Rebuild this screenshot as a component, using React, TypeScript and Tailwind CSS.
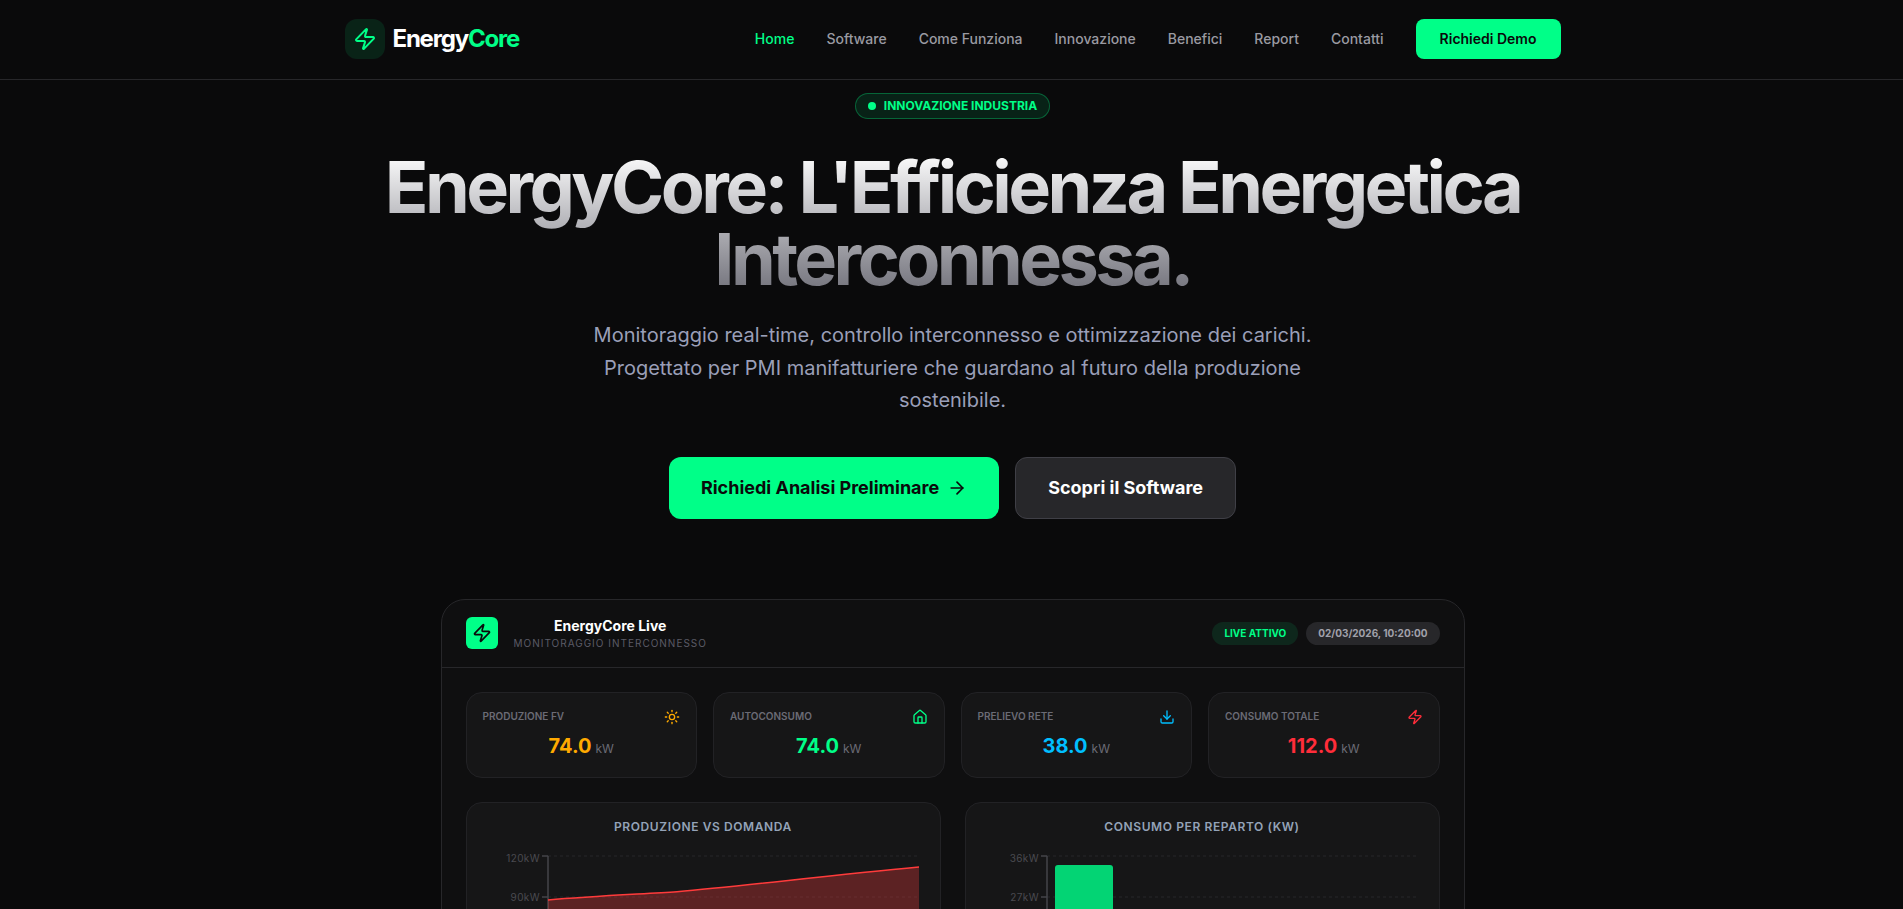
import React from 'react';
import { ArrowRight, Download, Home, Sun, Zap } from 'lucide-react';

const navItems = ['Software', 'Come Funziona', 'Innovazione', 'Benefici', 'Report', 'Contatti'];

const stats = [
  { label: 'PRODUZIONE FV', value: '74.0', color: 'text-[#ffaa00]', Icon: Sun },
  { label: 'AUTOCONSUMO', value: '74.0', color: 'text-[#00ff88]', Icon: Home },
  { label: 'PRELIEVO RETE', value: '38.0', color: 'text-[#00bfff]', Icon: Download },
  { label: 'CONSUMO TOTALE', value: '112.0', color: 'text-[#ff2d3a]', Icon: Zap },
];

function AreaChart() {
  return (
    <svg width="442" height="70" className="block">
      <line x1="65" y1="10" x2="435" y2="10" stroke="#27272a" strokeDasharray="3 3" />
      <line x1="65" y1="51" x2="435" y2="51" stroke="#27272a" strokeDasharray="3 3" />
      <path d="M65 10H59M65 51H59M65 10V70" stroke="#44444a" strokeWidth="1.5" fill="none" />
      <path d="M65 54 C 110 50, 160 48, 194 45.7 C 260 40, 340 30, 436 21 V70 H65 Z" fill="#ff4040" fillOpacity="0.3" />
      <path d="M65 54 C 110 50, 160 48, 194 45.7 C 260 40, 340 30, 436 21" stroke="#ff3b3b" strokeWidth="1.5" fill="none" />
      <text x="57" y="16" textAnchor="end" fontSize="10" letterSpacing="0.4" fill="#4a4a50">120kW</text>
      <text x="57" y="55" textAnchor="end" fontSize="10" letterSpacing="0.4" fill="#4a4a50">90kW</text>
    </svg>
  );
}

function BarChart() {
  return (
    <svg width="442" height="70" className="block">
      <line x1="65" y1="10" x2="434" y2="10" stroke="#27272a" strokeDasharray="3 3" />
      <line x1="65" y1="51" x2="434" y2="51" stroke="#27272a" strokeDasharray="3 3" />
      <path d="M65 10H59M65 51H59M65 10V70" stroke="#44444a" strokeWidth="1.5" fill="none" />
      <path d="M73 22a3 3 0 0 1 3 -3H128a3 3 0 0 1 3 3V70H73Z" fill="#03d474" />
      <text x="57" y="16" textAnchor="end" fontSize="10" letterSpacing="0.4" fill="#4a4a50">36kW</text>
      <text x="57" y="55" textAnchor="end" fontSize="10" letterSpacing="0.4" fill="#4a4a50">27kW</text>
    </svg>
  );
}

export default function App() {
  return (
    <div className="h-screen overflow-hidden bg-[#0a0a0b] text-white font-['Inter',sans-serif]">
      <nav className="h-20 pb-[1px] border-b border-[#27272a]">
        <div className="mx-auto max-w-[1216px] h-full flex items-center justify-between translate-x-[1px]">
          <div className="flex items-center gap-2">
            <div className="w-10 h-10 rounded-xl bg-[#00ff88]/10 flex items-center justify-center">
              <Zap className="w-6 h-6 text-[#00ff88]" />
            </div>
            <span className="text-2xl font-bold tracking-tighter">Energy<span className="text-[#00ff88]">Core</span></span>
          </div>
          <div className="flex items-center gap-8">
            <a className="text-sm font-medium text-[#00ff88]">Home</a>
            {navItems.map(n => (
              <a key={n} className="text-sm font-medium text-[#9a9aa2]">{n}</a>
            ))}
            <button className="h-10 px-6 rounded-lg bg-[#00ff88] text-[#0a0a0b] text-sm font-semibold">Richiedi Demo</button>
          </div>
        </div>
      </nav>

      <section className="flex flex-col items-center translate-x-[1px]">
        <div className="mt-[13px] h-[26px] px-3 flex items-center gap-2 rounded-full bg-[#00ff88]/10 border border-[#00ff88]/30">
          <span className="w-2 h-2 rounded-full bg-[#00ff88]"></span>
          <span className="text-xs font-bold text-[#00ff88]">INNOVAZIONE INDUSTRIA</span>
        </div>
        <h1 className="mt-8 text-center text-[72px] leading-[72px] font-bold tracking-tighter bg-clip-text text-transparent bg-gradient-to-b from-white to-[#71717a] max-w-[1216px]">
          EnergyCore: L'Efficienza Energetica<br />Interconnessa.
        </h1>
        <p className="mt-6 max-w-3xl text-center text-xl leading-[32.5px] text-[#9a9fb8]">
          Monitoraggio real-time, controllo interconnesso e ottimizzazione dei carichi. Progettato per PMI manifatturiere che guardano al futuro della produzione sostenibile.
        </p>
        <div className="mt-10 flex gap-4">
          <button className="h-[62px] px-8 rounded-xl bg-[#00ff88] text-[#0a0a0b] text-lg font-bold flex items-center gap-2">
            Richiedi Analisi Preliminare <ArrowRight className="w-5 h-5" />
          </button>
          <button className="h-[62px] px-8 rounded-xl bg-[#27272a] border border-[#3f3f46] text-lg font-bold text-white">
            Scopri il Software
          </button>
        </div>

        <div className="mt-20 w-[1024px] rounded-3xl border border-[#27272a] bg-[#0f0f10]">
          <div className="h-[68px] px-6 flex items-center justify-between border-b border-[#27272a]">
            <div className="flex items-center gap-4">
              <div className="w-8 h-8 rounded-md bg-[#00ff88] flex items-center justify-center">
                <Zap className="w-5 h-5 text-[#0a0a0b]" />
              </div>
              <div className="flex flex-col items-center">
                <span className="text-sm font-bold leading-5">EnergyCore Live</span>
                <span className="text-[10px] leading-[15px] tracking-[0.1em] text-[#5b5b66]">MONITORAGGIO INTERCONNESSO</span>
              </div>
            </div>
            <div className="flex items-center gap-2">
              <span className="h-[23px] px-3 flex items-center rounded-full bg-[#00ff88]/10 text-[10px] font-bold text-[#00ff88]">LIVE ATTIVO</span>
              <span className="h-[23px] px-3 flex items-center rounded-full bg-[#27272a] text-[10px] font-bold text-[#a1a1aa]">02/03/2026, 10:20:00</span>
            </div>
          </div>
          <div className="p-6">
            <div className="grid grid-cols-4 gap-4">
              {stats.map(({ label, value, color, Icon }) => (
                <div key={label} className="h-[86px] p-4 rounded-2xl bg-[#161617] border border-[#222225]">
                  <div className="flex items-center justify-between">
                    <span className="text-[10px] font-semibold text-[#6b6b75]">{label}</span>
                    <Icon className={`w-4 h-4 ${color}`} />
                  </div>
                  <div className="mt-[7px] text-center">
                    <span className={`text-xl font-bold ${color}`}>{value}</span>
                    <span className="ml-1 text-xs text-[#6b6b75]">kW</span>
                  </div>
                </div>
              ))}
            </div>
            <div className="mt-6 grid grid-cols-2 gap-6">
              <div className="rounded-2xl bg-[#161617] border border-[#222225] h-[300px] px-4 pt-4">
                <div className="text-center text-xs font-semibold tracking-[0.05em] text-[#94a3b8]">PRODUZIONE VS DOMANDA</div>
                <div className="mt-[11px]"><AreaChart /></div>
              </div>
              <div className="rounded-2xl bg-[#161617] border border-[#222225] h-[300px] px-4 pt-4">
                <div className="text-center text-xs font-semibold tracking-[0.05em] text-[#94a3b8]">CONSUMO PER REPARTO (KW)</div>
                <div className="mt-[11px]"><BarChart /></div>
              </div>
            </div>
          </div>
        </div>
      </section>
    </div>
  );
}
